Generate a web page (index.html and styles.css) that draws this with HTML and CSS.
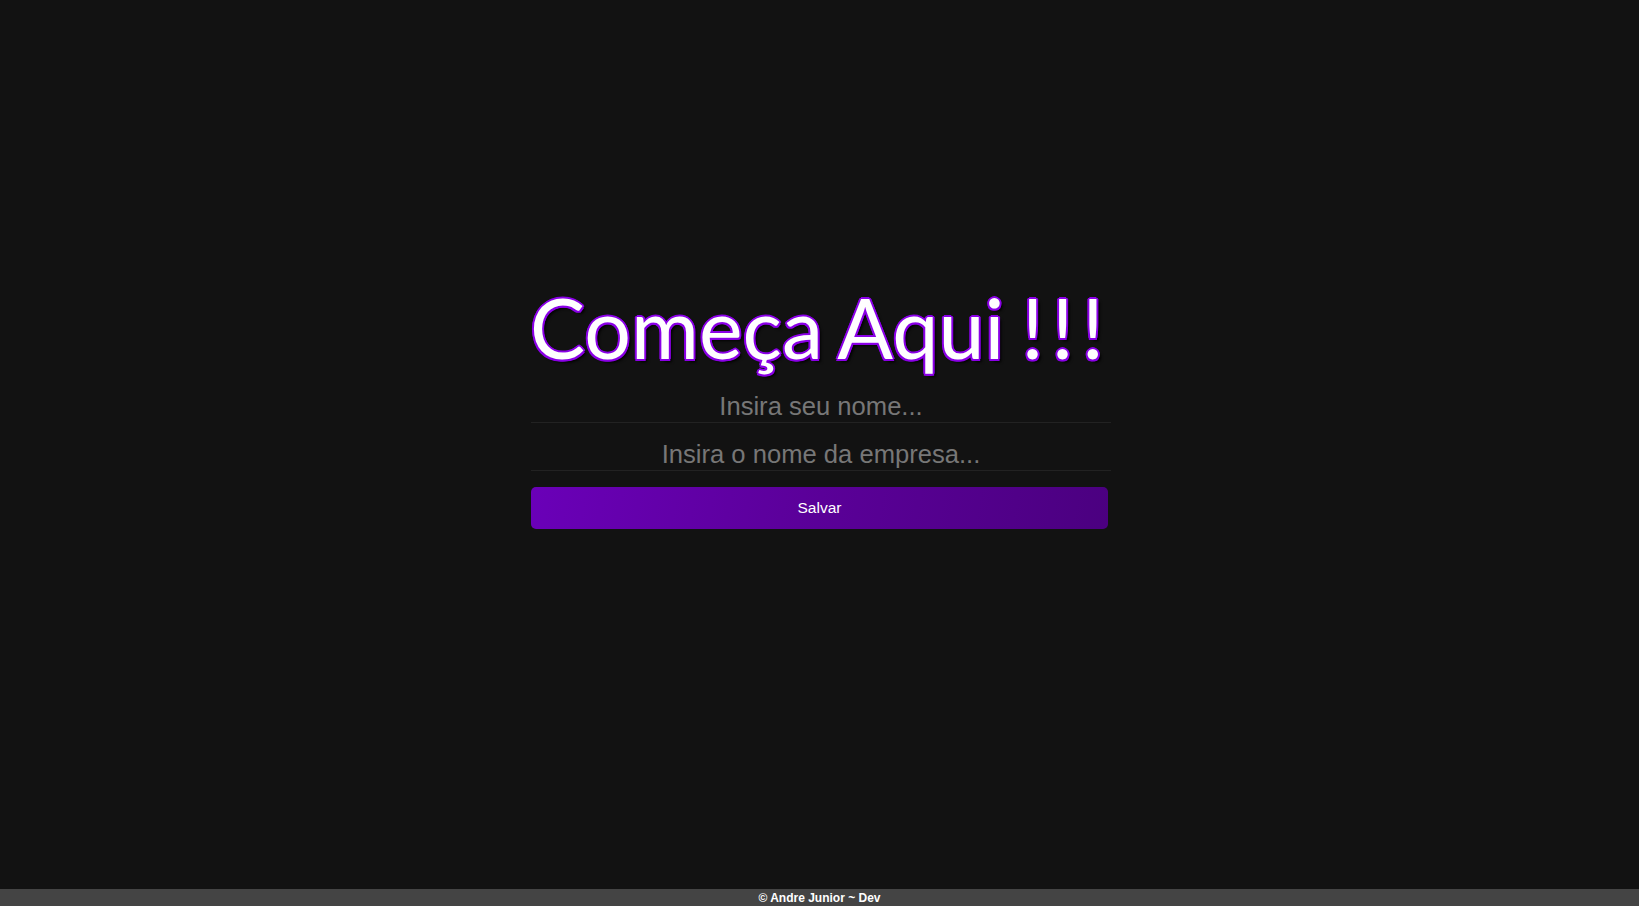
FILE: index.html
```html
<!DOCTYPE html>
<html lang="pt-BR">
<head>
<meta charset="utf-8">
<title>Começa Aqui</title>
<link rel="stylesheet" href="styles.css">
</head>
<body>
<main class="main">
  <div class="card">
    <h1 class="title">Começa Aqui <span class="bang">!!!</span></h1>
    <form class="form">
      <input class="field" type="text" placeholder="Insira seu nome...">
      <input class="field field-2" type="text" placeholder="Insira o nome da empresa...">
      <button class="btn" type="button">Salvar</button>
    </form>
  </div>
</main>
<footer class="footer">© Andre Junior ~ Dev</footer>
</body>
</html>
```
FILE: styles.css
```css
* { box-sizing: border-box; }
html, body { margin: 0; padding: 0; height: 100%; }
body {
  background: #121212;
  display: flex;
  flex-direction: column;
  min-height: 100vh;
  font-family: "Liberation Sans", Arial, sans-serif;
}
.main {
  flex: 1;
  display: flex;
  justify-content: center;
  align-items: center;
  padding-bottom: 80px;
}
.card {
  width: 580px;
  margin-left: 3px;
  display: flex;
  flex-direction: column;
  align-items: stretch;
}
.title {
  margin: 0 -10px 0 -10px;
  padding-right: 8px;
  font-family: Lato, "Open Sans", sans-serif;
  font-weight: 400;
  font-size: 82.5px;
  line-height: 96px;
  word-spacing: -4px;
  color: #fff;
  text-align: center;
  white-space: nowrap;
  text-shadow:
    -1.5px -1.5px 0 #8a00e6,
    1.5px -1.5px 0 #8a00e6,
    -1.5px 1.5px 0 #8a00e6,
    1.5px 1.5px 0 #8a00e6,
    0 -2px 0 #8a00e6,
    0 2px 0 #8a00e6,
    -2px 0 0 #8a00e6,
    2px 0 0 #8a00e6,
    3px 3px 3px #000;
}
.bang {
  letter-spacing: 8px;
  margin-right: -8px;
}
.form {
  display: flex;
  flex-direction: column;
}
.field {
  display: block;
  width: 100%;
  height: 35px;
  margin-top: 12px;
  padding: 2px 0 0;
  background: transparent;
  border: none;
  border-bottom: 1px solid #222;
  color: #ddd;
  font-family: "Liberation Sans", Arial, sans-serif;
  font-size: 25.6px;
  text-align: center;
  outline: none;
}
.field-2 { margin-top: 13px; }
.field::placeholder { color: #777; }
.btn {
  margin-top: 16px;
  width: 577px;
  height: 42px;
  border: none;
  border-radius: 5px;
  background: linear-gradient(100deg, #6a00b8 0%, #5a0098 50%, #4b0080 100%);
  color: #fff;
  font-family: "Liberation Sans", Arial, sans-serif;
  font-size: 15.5px;
  cursor: pointer;
}
.footer {
  height: 17px;
  background: #444;
  color: #fff;
  font-weight: bold;
  font-size: 12px;
  line-height: 18px;
  text-align: center;
}
```
